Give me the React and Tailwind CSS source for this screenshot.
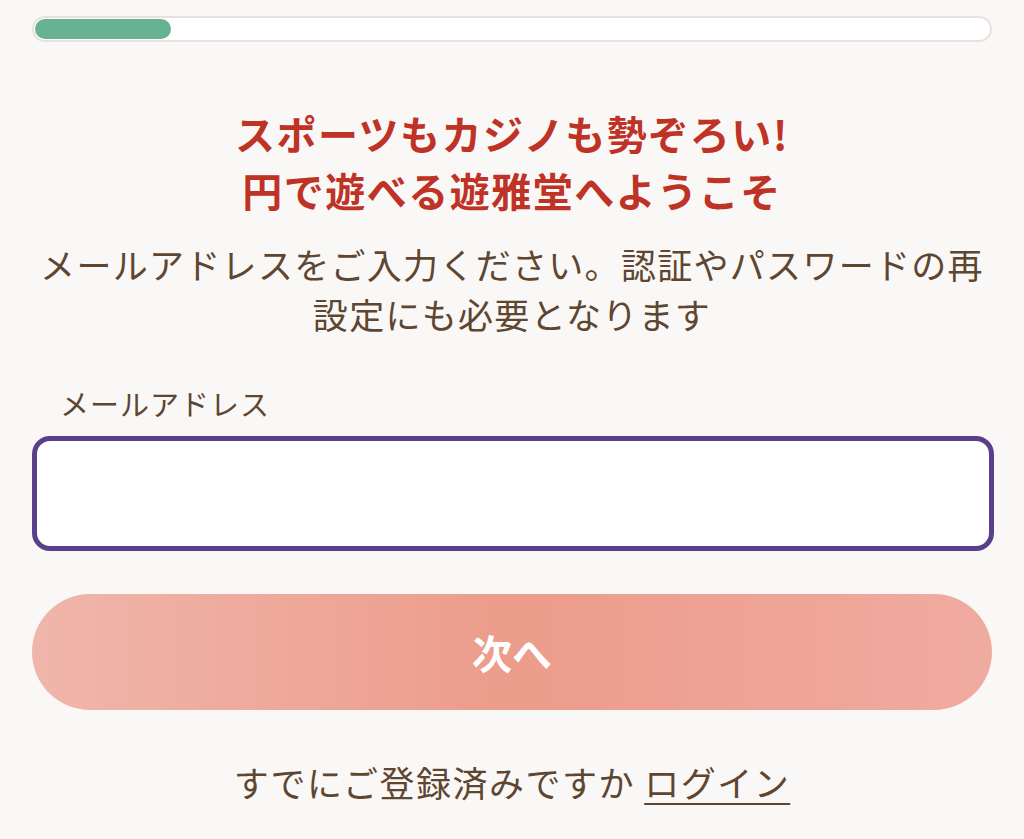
import React from "react";

const font = { fontFamily: '"Noto Sans CJK JP", "Noto Sans", sans-serif' };

const App = () => {
  return (
    <div className="min-h-[839px] bg-[#faf8f7] px-8 pt-4 text-[#5e4630]" style={font}>
      <div className="h-[26px] w-full rounded-full border-2 border-[#e9e1dd] bg-white p-px">
        <div className="h-full w-[136px] rounded-full bg-[#66b291]"></div>
      </div>

      <h1 className="mt-[63px] text-center text-[40px] font-bold leading-[57px] tracking-[1.5px] text-[#bf3326]">
        スポーツもカジノも勢ぞろい!
        <br />
        円で遊べる遊雅堂へようこそ
      </h1>

      <p className="mt-[20px] text-center text-[35px] leading-[50px] tracking-[1.3px]">
        メールアドレスをご入力ください。認証やパスワードの再設定にも必要となります
      </p>

      <label className="mt-[44px] block pl-7 text-[29px] leading-[40px] tracking-[1px]">
        メールアドレス
      </label>
      <input
        type="email"
        className="mt-[13px] block h-[115px] w-[962px] rounded-[18px] border-[5px] border-[#5a3f8b] bg-white px-6 text-[34px] outline-none"
      />

      <button className="mt-[43px] flex h-[116px] w-[960px] items-center justify-center rounded-full bg-gradient-to-r from-[#f0b6ab] via-[#ec9c8b] to-[#f0aba0] text-[40px] font-bold text-white">
        次へ
      </button>

      <p className="mt-[47px] text-center text-[35px] leading-[50px] tracking-[1.5px]">
        すでにご登録済みですか{" "}
        <a href="#" className="underline decoration-2 underline-offset-[6px]">
          ログイン
        </a>
      </p>
    </div>
  );
};

export default App;
